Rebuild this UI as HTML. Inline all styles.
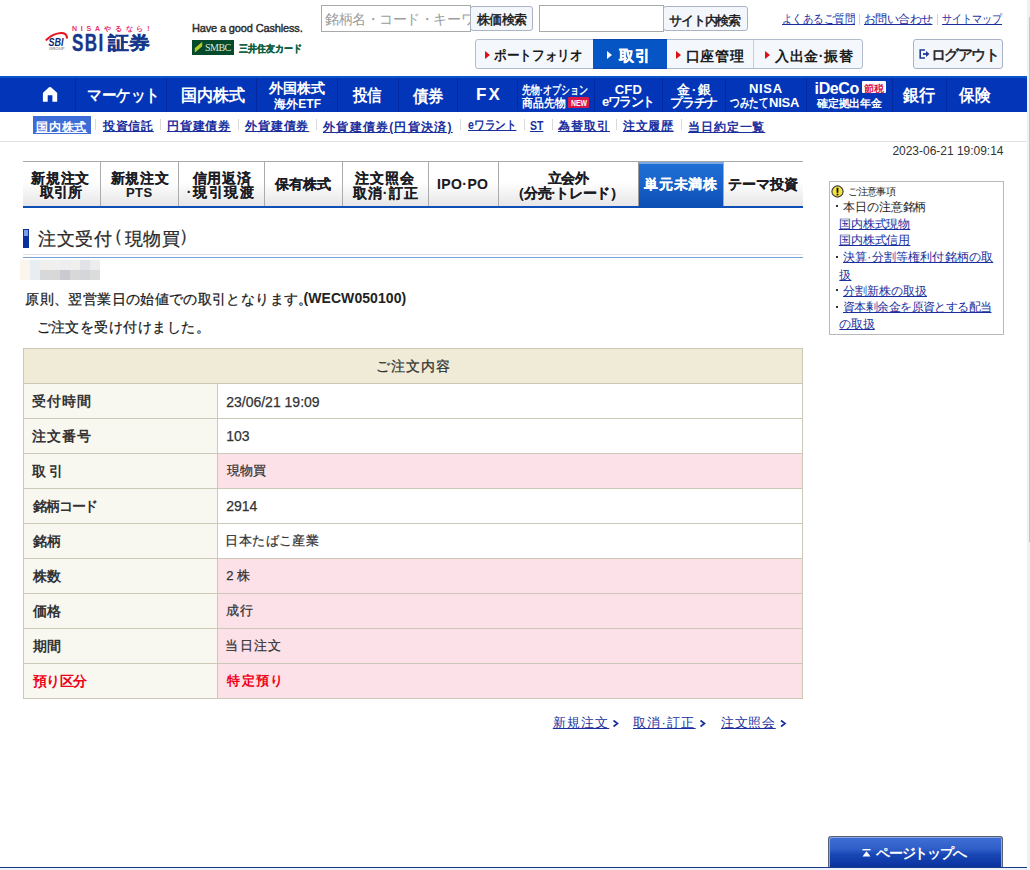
<!DOCTYPE html>
<html lang="ja">
<head>
<meta charset="utf-8">
<title>注文受付</title>
<style>
*{box-sizing:border-box;margin:0;padding:0}
html,body{width:1030px;height:870px;overflow:hidden;background:#fff}
body{position:relative;font-family:"Liberation Sans",sans-serif;color:#333}
.t{position:absolute;white-space:nowrap;line-height:1}
.b{position:absolute}
.btn{position:absolute;border:1px solid #aab4c6;border-radius:3px;background:#f3f6fb}
.inp{position:absolute;border:1px solid #a9a9a9;background:#fff;overflow:hidden}
.vsep{position:absolute;width:1px}
.tri{position:absolute;width:0;height:0;border-left:5px solid #e0101a;border-top:4px solid transparent;border-bottom:4px solid transparent}
.nsep{position:absolute;top:2px;width:1px;height:34px;background:#0229a0}
.ssep{position:absolute;top:119px;width:1px;height:11px;background:#d9d9d9}
.tab{position:absolute;top:162px;height:44px;background:linear-gradient(#ffffff 0%,#ffffff 45%,#e6e6e6 100%)}
.tsep{position:absolute;top:162px;width:1px;height:44px;background:#ababab}
.row{position:absolute;left:23px;width:780px;height:36px;border:1px solid #ccc8b8}
.row .lab{position:absolute;left:0;top:0;width:194px;height:34px;background:#f8f7f0;border-right:1px solid #ccc8b8}
.row .val{position:absolute;left:194px;top:0;right:0;height:34px;background:#fff}
.row.p .val{background:#fde1e8}
.arr{position:absolute;width:5px;height:5px;border-right:2px solid #1a2f9e;border-top:2px solid #1a2f9e;transform:rotate(45deg)}
</style>
</head>
<body>
<!-- SBI group mark -->
<svg class="b" style="left:44px;top:30px" width="26" height="22" viewBox="0 0 26 22">
 <path d="M2.5 9.8 Q9 3.5 17 3 Q22.5 2.8 23 7.6" stroke="#e8141e" stroke-width="2.2" fill="none" stroke-linecap="round"/>
 <text x="4.6" y="16" font-family="Liberation Sans" font-weight="bold" font-style="italic" font-size="10" fill="#0f2a7a" textLength="15" lengthAdjust="spacingAndGlyphs">SBI</text>
 <text x="5" y="20" font-family="Liberation Sans" font-weight="bold" font-size="4" fill="#9a9a9a" textLength="15.5" lengthAdjust="spacingAndGlyphs">GROUP</text>
</svg>
<!-- SMBC -->
<div class="b" style="left:192px;top:40px;width:42px;height:15px;background:#064a2c"></div>
<svg class="b" style="left:194px;top:41px" width="10" height="13" viewBox="0 0 10 13"><path d="M0.8 11.5 L0.8 7.2 L8.2 1 L8.2 5.3 Z" fill="#c9dc2c"/><path d="M0.8 8.8 L8.2 2.6 M0.8 10.2 L8.2 4" stroke="#7fa21c" stroke-width="0.5"/></svg>
<!-- search -->
<div class="inp" style="left:321px;top:5px;width:150px;height:27px"><div class="t" style="left:3px;top:6px;font-size:14px;letter-spacing:-0.45px;color:#9c9c9c">銘柄名・コード・キーワード</div></div>
<div class="btn" style="left:470px;top:6px;width:63px;height:25px"></div>
<div class="inp" style="left:539px;top:5px;width:125px;height:27px"></div>
<div class="btn" style="left:663px;top:6px;width:85px;height:25px"></div>
<div class="vsep" style="left:859px;top:14px;height:11px;background:#d6d6d6"></div>
<div class="vsep" style="left:937px;top:14px;height:11px;background:#d6d6d6"></div>
<!-- group -->
<div class="btn" style="left:475px;top:39px;width:388px;height:30px;border-color:#b3bccc;background:#f4f7fb"></div>
<div class="b" style="left:593px;top:39px;width:74px;height:30px;background:#0655c4;border-top:1px solid #0a46ae;border-bottom:1px solid #0a46ae"></div>
<div class="vsep" style="left:753px;top:40px;height:28px;background:#c8cfda"></div>
<div class="tri" style="left:485px;top:50.5px"></div>
<div class="tri" style="left:607px;top:50.5px;border-left-color:#fff"></div>
<div class="tri" style="left:676px;top:50.5px"></div>
<div class="tri" style="left:765px;top:50.5px"></div>
<div class="btn" style="left:913px;top:39px;width:90px;height:30px"></div>
<svg class="b" style="left:919px;top:49px" width="11" height="10" viewBox="0 0 11 10"><path d="M6 1 H1.2 V9 H6" stroke="#1f3a9a" stroke-width="1.6" fill="none"/><path d="M4 5 H8" stroke="#1f3a9a" stroke-width="1.8"/><path d="M7 2 L10.5 5 L7 8 Z" fill="#1f3a9a"/></svg>

<!-- blue nav -->
<div class="b" style="left:0;top:76px;width:1027px;height:36px;background:#0335b8"></div>
<div class="b" style="left:0;top:76px;width:1027px;height:2px;background:#0a54cc"></div>
<div class="nsep" style="left:75px;top:78px"></div>
<div class="nsep" style="left:166px;top:78px"></div>
<div class="nsep" style="left:256px;top:78px"></div>
<div class="nsep" style="left:337px;top:78px"></div>
<div class="nsep" style="left:398px;top:78px"></div>
<div class="nsep" style="left:457px;top:78px"></div>
<div class="nsep" style="left:517px;top:78px"></div>
<div class="nsep" style="left:594px;top:78px"></div>
<div class="nsep" style="left:662px;top:78px"></div>
<div class="nsep" style="left:725px;top:78px"></div>
<div class="nsep" style="left:806px;top:78px"></div>
<div class="nsep" style="left:892px;top:78px"></div>
<div class="nsep" style="left:946px;top:78px"></div>
<svg class="b" style="left:42px;top:86px" width="16" height="16" viewBox="0 0 16 16"><path d="M8 0.9 Q7.5 0.9 7 1.3 L1.3 6.6 Q0.9 7 0.9 7.6 L0.9 15.8 L5.7 15.8 L5.7 9.2 L10.4 9.2 L10.4 15.8 L15.2 15.8 L15.2 7.6 Q15.2 7 14.8 6.6 L9 1.3 Q8.5 0.9 8 0.9 Z" fill="#fff"/></svg>
<div class="b" style="left:568px;top:97px;width:21px;height:11px;background:#d8174a;border-radius:1px"></div>

<div class="b" style="left:862px;top:81px;width:24px;height:12px;background:#fff;border-radius:1px"></div>

<!-- subnav -->
<div class="b" style="left:33px;top:116px;width:58px;height:18px;background:#3d6cd8"></div>
<div class="ssep" style="left:95px"></div>
<div class="ssep" style="left:160px"></div>
<div class="ssep" style="left:238px"></div>
<div class="ssep" style="left:316px"></div>
<div class="ssep" style="left:460px"></div>
<div class="ssep" style="left:524px"></div>
<div class="ssep" style="left:552px"></div>
<div class="ssep" style="left:616px"></div>
<div class="ssep" style="left:681px"></div>
<div class="b" style="left:0;top:141px;width:1027px;height:1px;background:#e2e2e2"></div>

<!-- tabs -->
<div class="b" style="left:23px;top:161px;width:780px;height:1px;background:#a9a9a9"></div>
<div class="tab" style="left:23px;width:780px"></div>
<div class="tsep" style="left:100px"></div>
<div class="tsep" style="left:178px"></div>
<div class="tsep" style="left:264px"></div>
<div class="tsep" style="left:342px"></div>
<div class="tsep" style="left:428px"></div>
<div class="tsep" style="left:498px"></div>
<div class="tsep" style="left:723px"></div>
<div class="b" style="left:639px;top:162px;width:84px;height:44px;background:linear-gradient(#1f6fd6 0%,#1a64cc 45%,#0c4fb4 100%)"></div>
<div class="b" style="left:639px;top:162px;width:84px;height:2px;background:#7aa8e4"></div>
<div class="b" style="left:638px;top:162px;width:1px;height:44px;background:#9a9a9a"></div>
<div class="b" style="left:23px;top:206px;width:780px;height:2px;background:#0d4fb5"></div>

<!-- title -->
<div class="b" style="left:23px;top:229px;width:6px;height:19px;background:#0a2f9e"></div>
<div class="b" style="left:24px;top:230px;width:4px;height:6px;background:#7c9be0"></div>
<div class="b" style="left:23px;top:254px;width:780px;height:1px;background:#dfe4ea"></div>
<div class="b" style="left:23px;top:257px;width:780px;height:1px;background:#7ba2d8"></div>
<svg class="b" style="left:20px;top:260px" width="80" height="20" viewBox="0 0 80 20"><rect x="0" y="0" width="10" height="10" fill="#faf6ee"/><rect x="10" y="0" width="10" height="10" fill="#e8edf1"/><rect x="20" y="0" width="10" height="10" fill="#f0efee"/><rect x="30" y="0" width="10" height="10" fill="#f0f0ee"/><rect x="40" y="0" width="10" height="10" fill="#eeeef0"/><rect x="50" y="0" width="10" height="10" fill="#f0efec"/><rect x="60" y="0" width="10" height="10" fill="#e2e3e8"/><rect x="70" y="0" width="10" height="10" fill="#ededed"/><rect x="0" y="10" width="10" height="10" fill="#faf6ee"/><rect x="10" y="10" width="10" height="10" fill="#e8edf1"/><rect x="20" y="10" width="10" height="10" fill="#d9d8d8"/><rect x="30" y="10" width="10" height="10" fill="#d8d8d8"/><rect x="40" y="10" width="10" height="10" fill="#c9cbd0"/><rect x="50" y="10" width="10" height="10" fill="#d8d8d8"/><rect x="60" y="10" width="10" height="10" fill="#d5d6da"/><rect x="70" y="10" width="10" height="10" fill="#dcdcdc"/></svg>

<!-- table -->
<div class="b" style="left:23px;top:348px;width:780px;height:36px;background:#efebd6;border:1px solid #ccc8b8"></div>
<div class="row" style="top:383px"><div class="lab"></div><div class="val"></div></div>
<div class="row" style="top:418px"><div class="lab"></div><div class="val"></div></div>
<div class="row p" style="top:453px"><div class="lab"></div><div class="val"></div></div>
<div class="row" style="top:488px"><div class="lab"></div><div class="val"></div></div>
<div class="row" style="top:523px"><div class="lab"></div><div class="val"></div></div>
<div class="row p" style="top:558px"><div class="lab"></div><div class="val"></div></div>
<div class="row p" style="top:593px"><div class="lab"></div><div class="val"></div></div>
<div class="row p" style="top:628px"><div class="lab"></div><div class="val"></div></div>
<div class="row p" style="top:663px"><div class="lab"></div><div class="val"></div></div>

<!-- notice -->
<div class="b" style="left:829px;top:181px;width:175px;height:154px;border:1px solid #b9b9b9"></div>
<svg class="b" style="left:831px;top:184.5px" width="13" height="13" viewBox="0 0 13 13"><circle cx="6.5" cy="6.5" r="5.6" fill="#f3e33a" stroke="#3a3a3a" stroke-width="1.1"/><rect x="5.6" y="2.8" width="1.8" height="5" fill="#111"/><rect x="5.6" y="8.7" width="1.8" height="1.7" fill="#111"/></svg>
<div class="b" style="left:836px;top:205px;width:2px;height:2px;background:#333"></div>
<div class="b" style="left:836px;top:256px;width:2px;height:2px;background:#333"></div>
<div class="b" style="left:836px;top:289px;width:2px;height:2px;background:#333"></div>
<div class="b" style="left:836px;top:306px;width:2px;height:2px;background:#333"></div>

<!-- bottom link arrows -->
<svg class="b" style="left:610px;top:718px" width="180" height="11" viewBox="0 0 180 11"><path d="M3.5 2.5 L7.5 5.5 L3.5 8.5 M90.5 2.5 L94.5 5.5 L90.5 8.5 M171 2.5 L175 5.5 L171 8.5" stroke="#1a2f9e" stroke-width="1.7" fill="none"/></svg>

<!-- page top -->
<div class="b" style="left:828px;top:836px;width:175px;height:31px;border:1px solid #5a6070;border-bottom:none;border-radius:3px 3px 0 0;background:linear-gradient(#4070d6 0%,#2f5ec8 40%,#1746b4 60%,#0a329e 100%);box-shadow:inset 1px 1px 0 #86a8ea,inset -1px 0 0 #86a8ea"></div>
<svg class="b" style="left:862px;top:849px" width="9" height="8" viewBox="0 0 9 8"><rect x="0.5" y="0" width="8" height="1.4" fill="#fff"/><path d="M4.5 2.2 L8.5 7.5 L0.5 7.5 Z" fill="#fff"/></svg>
<div class="b" style="left:0;top:867px;width:1027px;height:1px;background:#1a3a8c"></div>
<div class="b" style="left:0;top:868px;width:1027px;height:2px;background:#eef1f6"></div>
<div class="b" style="left:1027px;top:0;width:3px;height:870px;background:#f1f1f1"></div>
<div class="b" style="left:1029px;top:17px;width:1px;height:525px;background:#c4c4c4"></div>
<div id="nisa" class="t" style="left:72.00px;top:24.50px;font-size:7px;font-weight:bold;color:#e6306a;letter-spacing:3.81px;">NISAやるなら!</div>
<div id="sbi" class="t" style="left:71.77px;top:30.50px;font-size:24px;font-weight:bold;color:#17378a;letter-spacing:2.00px;-webkit-text-stroke:0.4px #17378a;transform:scaleX(0.7099);transform-origin:0 0">SBI</div>
<div id="shoken" class="t" style="left:108.15px;top:33.50px;font-size:18px;font-weight:bold;color:#17378a;letter-spacing:0.00px;-webkit-text-stroke:0.4px #17378a;transform:scaleX(1.1564);transform-origin:0 0">証券</div>
<div id="cashless" class="t" style="left:192.00px;top:23.10px;font-size:11px;font-weight:normal;color:#2a2a2a;letter-spacing:-0.15px;-webkit-text-stroke:0.4px #2a2a2a">Have a good Cashless.</div>
<div id="smbctxt" class="t" style="left:205.00px;top:43.00px;font-size:10px;font-weight:normal;color:#dfe8d8;letter-spacing:-0.50px;font-family:'Liberation Serif',serif">SMBC</div>
<div id="mitsui" class="t" style="left:239.20px;top:43.90px;font-size:10px;font-weight:bold;color:#0f6040;letter-spacing:0.00px;-webkit-text-stroke:0.3px #0f6040;transform:scaleX(0.8921);transform-origin:0 0">三井住友カード</div>
<div id="kabuka" class="t" style="left:477.00px;top:12.80px;font-size:13px;font-weight:normal;color:#1a1a1a;letter-spacing:-0.67px;-webkit-text-stroke:0.45px #1a1a1a">株価検索</div>
<div id="sitesearch" class="t" style="left:669.10px;top:13.60px;font-size:13px;font-weight:normal;color:#1a1a1a;letter-spacing:-1.18px;-webkit-text-stroke:0.45px #1a1a1a">サイト内検索</div>
<div id="faq" class="t" style="left:782.40px;top:13.00px;font-size:12px;font-weight:normal;color:#1a2f9e;letter-spacing:0.00px;text-decoration:underline;transform:scaleX(0.8690);transform-origin:0 0">よくあるご質問</div>
<div id="contact" class="t" style="left:864.00px;top:13.00px;font-size:12px;font-weight:normal;color:#1a2f9e;letter-spacing:-0.60px;text-decoration:underline">お問い合わせ</div>
<div id="sitemap" class="t" style="left:942.00px;top:13.00px;font-size:12px;font-weight:normal;color:#1a2f9e;letter-spacing:0.00px;text-decoration:underline;transform:scaleX(0.8340);transform-origin:0 0">サイトマップ</div>
<div id="pf" class="t" style="left:494.40px;top:47.80px;font-size:14px;font-weight:bold;color:#1a1a1a;letter-spacing:0.00px;;transform:scaleX(0.9021);transform-origin:0 0">ポートフォリオ</div>
<div id="torihiki" class="t" style="left:619.10px;top:48.20px;font-size:15px;font-weight:bold;color:#fff;letter-spacing:-1.45px;-webkit-text-stroke:0.3px #fff">取 引</div>
<div id="koza" class="t" style="left:685.50px;top:48.80px;font-size:14px;font-weight:bold;color:#1a1a1a;letter-spacing:0.70px;">口座管理</div>
<div id="nyushukkin" class="t" style="left:775.00px;top:48.80px;font-size:14px;font-weight:bold;color:#1a1a1a;letter-spacing:0.62px;">入出金·振替</div>
<div id="logout" class="t" style="left:930.50px;top:46.90px;font-size:15px;font-weight:normal;color:#1a1a1a;letter-spacing:-1.35px;-webkit-text-stroke:0.5px #1a1a1a">ログアウト</div>
<div id="n_market" class="t" style="left:86.53px;top:86.80px;font-size:17px;font-weight:bold;color:#fff;letter-spacing:0.00px;;transform:scaleX(0.8593);transform-origin:0 0">マーケット</div>
<div id="n_kokunai" class="t" style="left:180.85px;top:87.30px;font-size:17px;font-weight:bold;color:#fff;letter-spacing:0.00px;;transform:scaleX(0.9437);transform-origin:0 0">国内株式</div>
<div id="n_gaikoku" class="t" style="left:269.00px;top:81.40px;font-size:14px;font-weight:bold;color:#fff;letter-spacing:-0.03px;">外国株式</div>
<div id="n_etf" class="t" style="left:274.00px;top:98.10px;font-size:12px;font-weight:bold;color:#fff;letter-spacing:0.10px;">海外ETF</div>
<div id="n_toshin" class="t" style="left:352.77px;top:86.50px;font-size:17px;font-weight:bold;color:#fff;letter-spacing:0.00px;;transform:scaleX(0.8512);transform-origin:0 0">投信</div>
<div id="n_saiken" class="t" style="left:413.27px;top:87.50px;font-size:17px;font-weight:bold;color:#fff;letter-spacing:0.00px;;transform:scaleX(0.9058);transform-origin:0 0">債券</div>
<div id="n_fx" class="t" style="left:476.00px;top:86.00px;font-size:17px;font-weight:bold;color:#fff;letter-spacing:2.00px;">FX</div>
<div id="n_sakimono" class="t" style="left:522.38px;top:84.20px;font-size:12px;font-weight:bold;color:#fff;letter-spacing:0.00px;;transform:scaleX(0.7494);transform-origin:0 0">先物·オプション</div>
<div id="n_shohin" class="t" style="left:522.37px;top:97.00px;font-size:12px;font-weight:bold;color:#fff;letter-spacing:0.00px;;transform:scaleX(0.9060);transform-origin:0 0">商品先物</div>
<div id="n_new" class="t" style="left:570.50px;top:98.50px;font-size:9px;font-weight:bold;color:#fff;letter-spacing:0.00px;;transform:scaleX(0.7619);transform-origin:0 0">NEW</div>
<div id="n_cfd" class="t" style="left:614.80px;top:82.60px;font-size:13px;font-weight:bold;color:#fff;letter-spacing:0.15px;">CFD</div>
<div id="n_ewarrant" class="t" style="left:602.00px;top:94.50px;font-size:13px;font-weight:bold;color:#fff;letter-spacing:-1.48px;">eワラント</div>
<div id="n_kingin" class="t" style="left:676.90px;top:83.00px;font-size:13px;font-weight:bold;color:#fff;letter-spacing:2.00px;">金·銀</div>
<div id="n_platina" class="t" style="left:670.00px;top:96.00px;font-size:13px;font-weight:bold;color:#fff;letter-spacing:-1.17px;">プラチナ</div>
<div id="n_nisa" class="t" style="left:749.00px;top:82.00px;font-size:13px;font-weight:bold;color:#fff;letter-spacing:0.67px;">NISA</div>
<div id="n_tsumitate" class="t" style="left:730.36px;top:96.00px;font-size:13px;font-weight:bold;color:#fff;letter-spacing:0.00px;;transform:scaleX(0.7327);transform-origin:0 0">つみたて</div>
<div id="n_tsumitate2" class="t" style="left:769.00px;top:96.00px;font-size:13px;font-weight:bold;color:#fff;letter-spacing:-0.21px;">NISA</div>
<div id="n_ideco" class="t" style="left:814.60px;top:80.90px;font-size:16px;font-weight:bold;color:#fff;letter-spacing:-0.40px;">iDeCo</div>
<div id="n_setsuzei" class="t" style="left:864.48px;top:83.70px;font-size:10px;font-weight:bold;color:#d8174a;letter-spacing:0.00px;;transform:scaleX(1.0036);transform-origin:0 0">節税</div>
<div id="n_kakutei" class="t" style="left:816.80px;top:97.90px;font-size:11px;font-weight:bold;color:#fff;letter-spacing:-0.12px;">確定拠出年金</div>
<div id="n_ginko" class="t" style="left:902.94px;top:86.50px;font-size:17px;font-weight:bold;color:#fff;letter-spacing:0.00px;;transform:scaleX(0.9449);transform-origin:0 0">銀行</div>
<div id="n_hoken" class="t" style="left:958.94px;top:86.50px;font-size:17px;font-weight:bold;color:#fff;letter-spacing:0.00px;;transform:scaleX(0.9163);transform-origin:0 0">保険</div>
<div id="s1" class="t" style="left:35.70px;top:120.60px;font-size:12px;font-weight:bold;color:#fff;letter-spacing:0.91px;text-decoration:underline">国内株式</div>
<div id="s2" class="t" style="left:103.00px;top:119.70px;font-size:12px;font-weight:bold;color:#1a2f9e;letter-spacing:0.70px;text-decoration:underline">投資信託</div>
<div id="s3" class="t" style="left:167.00px;top:119.70px;font-size:12px;font-weight:bold;color:#1a2f9e;letter-spacing:0.78px;text-decoration:underline">円貨建債券</div>
<div id="s4" class="t" style="left:245.30px;top:119.70px;font-size:12px;font-weight:bold;color:#1a2f9e;letter-spacing:0.78px;text-decoration:underline">外貨建債券</div>
<div id="s5" class="t" style="left:323.00px;top:120.70px;font-size:12px;font-weight:bold;color:#1a2f9e;letter-spacing:1.25px;text-decoration:underline">外貨建債券(円貨決済)</div>
<div id="s6" class="t" style="left:467.55px;top:118.70px;font-size:12px;font-weight:bold;color:#1a2f9e;letter-spacing:0.00px;text-decoration:underline;transform:scaleX(0.8848);transform-origin:0 0">eワラント</div>
<div id="s7" class="t" style="left:530.00px;top:120.00px;font-size:12px;font-weight:bold;color:#1a2f9e;letter-spacing:0.00px;text-decoration:underline;transform:scaleX(0.8750);transform-origin:0 0">ST</div>
<div id="s8" class="t" style="left:558.00px;top:119.70px;font-size:12px;font-weight:bold;color:#1a2f9e;letter-spacing:1.00px;text-decoration:underline">為替取引</div>
<div id="s9" class="t" style="left:623.00px;top:119.70px;font-size:12px;font-weight:bold;color:#1a2f9e;letter-spacing:0.67px;text-decoration:underline">注文履歴</div>
<div id="s10" class="t" style="left:688.00px;top:120.70px;font-size:12px;font-weight:bold;color:#1a2f9e;letter-spacing:0.88px;text-decoration:underline">当日約定一覧</div>
<div id="date" class="t" style="left:892.40px;top:145.10px;font-size:12px;font-weight:normal;color:#333;letter-spacing:-0.02px;">2023-06-21 19:09:14</div>
<div id="t1a" class="t" style="left:31.40px;top:170.80px;font-size:14px;font-weight:bold;color:#1a1a22;letter-spacing:0.67px;;-webkit-text-stroke:0.1px #1a1a22">新規注文</div>
<div id="t1b" class="t" style="left:39.50px;top:184.70px;font-size:14px;font-weight:bold;color:#1a1a22;letter-spacing:0.25px;;-webkit-text-stroke:0.1px #1a1a22">取引所</div>
<div id="t2a" class="t" style="left:110.60px;top:170.80px;font-size:14px;font-weight:bold;color:#1a1a22;letter-spacing:0.67px;;-webkit-text-stroke:0.1px #1a1a22">新規注文</div>
<div id="t2b" class="t" style="left:125.90px;top:186.00px;font-size:13px;font-weight:bold;color:#1a1a22;letter-spacing:0.55px;;-webkit-text-stroke:0.1px #1a1a22">PTS</div>
<div id="t3a" class="t" style="left:192.60px;top:170.80px;font-size:14px;font-weight:bold;color:#1a1a22;letter-spacing:0.67px;;-webkit-text-stroke:0.1px #1a1a22">信用返済</div>
<div id="t3b" class="t" style="left:186.80px;top:184.70px;font-size:14px;font-weight:bold;color:#1a1a22;letter-spacing:1.62px;;-webkit-text-stroke:0.1px #1a1a22">·現引現渡</div>
<div id="t4" class="t" style="left:274.50px;top:177.20px;font-size:14px;font-weight:bold;color:#1a1a22;letter-spacing:0.30px;;-webkit-text-stroke:0.1px #1a1a22">保有株式</div>
<div id="t5a" class="t" style="left:355.40px;top:170.80px;font-size:14px;font-weight:bold;color:#1a1a22;letter-spacing:0.97px;;-webkit-text-stroke:0.1px #1a1a22">注文照会</div>
<div id="t5b" class="t" style="left:352.60px;top:185.80px;font-size:14px;font-weight:bold;color:#1a1a22;letter-spacing:1.10px;;-webkit-text-stroke:0.1px #1a1a22">取消·訂正</div>
<div id="t6" class="t" style="left:437.00px;top:177.20px;font-size:14px;font-weight:bold;color:#1a1a22;letter-spacing:0.40px;;-webkit-text-stroke:0.1px #1a1a22">IPO·PO</div>
<div id="t7a" class="t" style="left:547.70px;top:170.80px;font-size:14px;font-weight:bold;color:#1a1a22;letter-spacing:-0.30px;;-webkit-text-stroke:0.1px #1a1a22">立会外</div>
<div id="t7b" class="t" style="left:510.60px;top:185.80px;font-size:14px;font-weight:bold;color:#1a1a22;letter-spacing:-0.45px;;-webkit-text-stroke:0.1px #1a1a22">（分売·トレード）</div>
<div id="t8" class="t" style="left:643.90px;top:176.50px;font-size:14px;font-weight:bold;color:#fff;letter-spacing:0.82px;;-webkit-text-stroke:0.1px #fff">単元未満株</div>
<div id="t9" class="t" style="left:728.40px;top:176.90px;font-size:14px;font-weight:bold;color:#1a1a22;letter-spacing:-0.10px;;-webkit-text-stroke:0.1px #1a1a22">テーマ投資</div>
<div id="title" class="t" style="left:38.25px;top:229.50px;font-size:18px;font-weight:normal;color:#2a2a2a;letter-spacing:0.62px;;-webkit-text-stroke:0.25px #2a2a2a">注文受付</div>
<div id="title_p1" class="t" style="left:105.20px;top:227.00px;font-size:18px;font-weight:normal;color:#2a2a2a;letter-spacing:0.00px;;-webkit-text-stroke:0.25px #2a2a2a">（</div>
<div id="title2" class="t" style="left:125.00px;top:229.50px;font-size:18px;font-weight:normal;color:#2a2a2a;letter-spacing:0.35px;;-webkit-text-stroke:0.25px #2a2a2a">現物買</div>
<div id="title_p2" class="t" style="left:179.00px;top:227.00px;font-size:18px;font-weight:normal;color:#2a2a2a;letter-spacing:0.00px;;-webkit-text-stroke:0.25px #2a2a2a">）</div>
<div id="msg1" class="t" style="left:25.40px;top:292.10px;font-size:14px;font-weight:normal;color:#1a1a1a;letter-spacing:0.36px;;-webkit-text-stroke:0.25px #1a1a1a">原則、翌営業日の始値での取引となります。</div>
<div id="msg1b" class="t" style="left:303.50px;top:291.00px;font-size:14px;font-weight:bold;color:#222;letter-spacing:0.07px;">(WECW050100)</div>
<div id="msg2" class="t" style="left:36.50px;top:320.40px;font-size:14px;font-weight:normal;color:#1a1a1a;letter-spacing:0.48px;;-webkit-text-stroke:0.25px #1a1a1a">ご注文を受け付けました。</div>
<div id="th" class="t" style="left:376.30px;top:359.30px;font-size:14px;font-weight:normal;color:#333;letter-spacing:0.82px;;-webkit-text-stroke:0.25px #333">ご注文内容</div>
<div id="l0" class="t" style="left:32.10px;top:394.00px;font-size:14px;font-weight:bold;color:#333;letter-spacing:1.00px;">受付時間</div>
<div id="v0" class="t" style="left:226.20px;top:395.00px;font-size:14px;font-weight:normal;color:#333;letter-spacing:0.00px;;-webkit-text-stroke:0.25px #333">23/06/21 19:09</div>
<div id="l1" class="t" style="left:32.10px;top:429.00px;font-size:14px;font-weight:bold;color:#333;letter-spacing:1.00px;">注文番号</div>
<div id="v1" class="t" style="left:226.20px;top:429.00px;font-size:14px;font-weight:normal;color:#333;letter-spacing:0.00px;;-webkit-text-stroke:0.25px #333">103</div>
<div id="l2" class="t" style="left:32.10px;top:464.00px;font-size:14px;font-weight:bold;color:#333;letter-spacing:2.60px;">取引</div>
<div id="v2" class="t" style="left:227.20px;top:463.50px;font-size:13px;font-weight:normal;color:#333;letter-spacing:-0.25px;;-webkit-text-stroke:0.25px #333">現物買</div>
<div id="l3" class="t" style="left:33.10px;top:499.00px;font-size:14px;font-weight:bold;color:#333;letter-spacing:-1.15px;">銘柄コード</div>
<div id="v3" class="t" style="left:226.20px;top:499.00px;font-size:14px;font-weight:normal;color:#333;letter-spacing:0.00px;;-webkit-text-stroke:0.25px #333">2914</div>
<div id="l4" class="t" style="left:33.10px;top:534.00px;font-size:14px;font-weight:bold;color:#333;letter-spacing:-0.40px;">銘柄</div>
<div id="v4" class="t" style="left:225.20px;top:533.50px;font-size:13px;font-weight:normal;color:#333;letter-spacing:0.44px;;-webkit-text-stroke:0.25px #333">日本たばこ産業</div>
<div id="l5" class="t" style="left:33.10px;top:569.00px;font-size:14px;font-weight:bold;color:#333;letter-spacing:-0.40px;">株数</div>
<div id="v5" class="t" style="left:226.20px;top:568.50px;font-size:13px;font-weight:normal;color:#333;letter-spacing:0.00px;;-webkit-text-stroke:0.25px #333">2 株</div>
<div id="l6" class="t" style="left:33.10px;top:604.00px;font-size:14px;font-weight:bold;color:#333;letter-spacing:-0.40px;">価格</div>
<div id="v6" class="t" style="left:226.20px;top:603.50px;font-size:13px;font-weight:normal;color:#333;letter-spacing:1.00px;;-webkit-text-stroke:0.25px #333">成行</div>
<div id="l7" class="t" style="left:33.10px;top:639.00px;font-size:14px;font-weight:bold;color:#333;letter-spacing:-0.40px;">期間</div>
<div id="v7" class="t" style="left:225.20px;top:638.50px;font-size:13px;font-weight:normal;color:#333;letter-spacing:1.33px;;-webkit-text-stroke:0.25px #333">当日注文</div>
<div id="l8" class="t" style="left:33.10px;top:674.00px;font-size:14px;font-weight:bold;color:#f00018;letter-spacing:-0.67px;">預り区分</div>
<div id="v8" class="t" style="left:227.20px;top:673.50px;font-size:13px;font-weight:bold;color:#f00018;letter-spacing:1.33px;">特定預り</div>
<div id="nt_head" class="t" style="left:848.10px;top:187.20px;font-size:10px;font-weight:normal;color:#222;letter-spacing:-0.55px;">ご注意事項</div>
<div id="nt1" class="t" style="left:842.80px;top:201.10px;font-size:12px;font-weight:normal;color:#222;letter-spacing:-0.05px;">本日の注意銘柄</div>
<div id="nt2" class="t" style="left:838.80px;top:217.70px;font-size:12px;font-weight:normal;color:#1a2f9e;letter-spacing:-0.08px;text-decoration:underline">国内株式現物</div>
<div id="nt3" class="t" style="left:838.80px;top:234.00px;font-size:12px;font-weight:normal;color:#1a2f9e;letter-spacing:-0.08px;text-decoration:underline">国内株式信用</div>
<div id="nt4" class="t" style="left:843.00px;top:251.20px;font-size:12px;font-weight:normal;color:#1a2f9e;letter-spacing:0.17px;text-decoration:underline">決算·分割等権利付銘柄の取</div>
<div id="nt5" class="t" style="left:839.40px;top:269.10px;font-size:12px;font-weight:normal;color:#1a2f9e;letter-spacing:0.00px;text-decoration:underline">扱</div>
<div id="nt6" class="t" style="left:843.00px;top:285.00px;font-size:12px;font-weight:normal;color:#1a2f9e;letter-spacing:0.00px;text-decoration:underline">分割新株の取扱</div>
<div id="nt7" class="t" style="left:843.00px;top:301.20px;font-size:12px;font-weight:normal;color:#1a2f9e;letter-spacing:-0.58px;text-decoration:underline">資本剰余金を原資とする配当</div>
<div id="nt8" class="t" style="left:839.40px;top:318.10px;font-size:12px;font-weight:normal;color:#1a2f9e;letter-spacing:-0.20px;text-decoration:underline">の取扱</div>
<div id="bl1" class="t" style="left:552.80px;top:716.10px;font-size:13px;font-weight:normal;color:#1a2f9e;letter-spacing:1.10px;text-decoration:underline">新規注文</div>
<div id="bl2" class="t" style="left:633.00px;top:716.10px;font-size:13px;font-weight:normal;color:#1a2f9e;letter-spacing:1.25px;text-decoration:underline">取消·訂正</div>
<div id="bl3" class="t" style="left:721.00px;top:716.10px;font-size:13px;font-weight:normal;color:#1a2f9e;letter-spacing:0.67px;text-decoration:underline">注文照会</div>
<div id="pagetop" class="t" style="left:876.00px;top:846.10px;font-size:14px;font-weight:bold;color:#fff;letter-spacing:-1.25px;">ページトップへ</div>
</body>
</html>
